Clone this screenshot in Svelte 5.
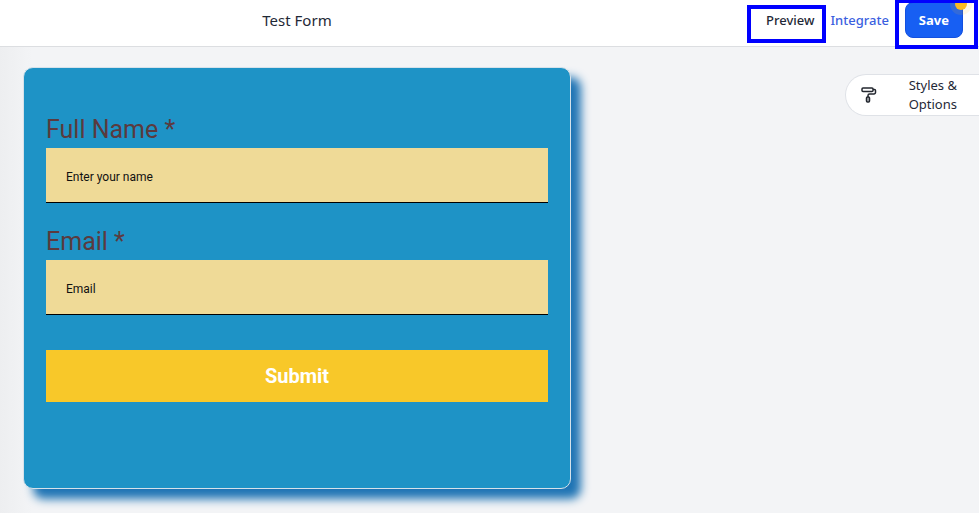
<script lang="ts">
	interface Field {
		id: string;
		label: string;
		type: string;
		placeholder: string;
	}

	const formName = "Test Form";

	const fields: Field[] = [
		{ id: "full-name", label: "Full Name", type: "text", placeholder: "Enter your name" },
		{ id: "email", label: "Email", type: "email", placeholder: "Email" }
	];

	let values = $state<Record<string, string>>({ "full-name": "", email: "" });

	function handleSubmit(event: SubmitEvent) {
		event.preventDefault();
	}
</script>

<div class="builder">
	<header>
		<h1>{formName}</h1>
		<nav>
			<span class="marked preview">
				<a href="#preview">Preview</a>
			</span>
			<a class="integrate" href="#integrate">Integrate</a>
			<span class="marked save">
				<button type="button" class="save-button">Save</button>
				<span class="badge"></span>
			</span>
		</nav>
	</header>

	<main>
		<form onsubmit={handleSubmit}>
			{#each fields as field (field.id)}
				<div class="field">
					<label for={field.id}>{field.label} *</label>
					<input
						id={field.id}
						type={field.type}
						placeholder={field.placeholder}
						bind:value={values[field.id]}
					/>
				</div>
			{/each}
			<button type="submit" class="submit-button">Submit</button>
		</form>

		<button type="button" class="styles-button">
			<svg width="16" height="16" viewBox="0 0 16 16" fill="none" aria-hidden="true">
				<rect x="1" y="1" width="11" height="3.5" rx="1" />
				<path d="M12 2.5H13.5a1 1 0 0 1 1 1v2a1.5 1.5 0 0 1-1.5 1.5H8.5A1.5 1.5 0 0 0 7 8.5v1.5" />
				<rect class="handle" x="5.5" y="10" width="3" height="5" rx="1" />
			</svg>
			<span>Styles &amp;<br />Options</span>
		</button>
	</main>
</div>

<style>
	:global(body) {
		margin: 0;
		background: #f3f4f6;
	}

	.builder {
		min-height: 100vh;
		overflow: hidden;
		background: linear-gradient(to right, #edeef0, #f3f4f6 32px);
		font-family: "Noto Sans", "Open Sans", sans-serif;
		color: #1f2937;
	}

	header {
		display: flex;
		align-items: center;
		justify-content: space-between;
		box-sizing: border-box;
		height: 47px;
		padding: 0 16px 6px 23px;
		background: #fff;
		border-bottom: 1px solid #dcdee1;
	}

	h1 {
		flex: 1;
		max-width: 548px;
		margin: 0;
		font-size: 15px;
		font-weight: 400;
		line-height: 20px;
		text-align: center;
	}

	nav {
		display: flex;
		align-items: center;
		gap: 16px;
		font-size: 13px;
		font-weight: 500;
		line-height: 20px;
	}

	a {
		color: inherit;
		text-decoration: none;
	}

	.integrate {
		color: #3b5fe0;
	}

	/* Blue frames that call out the two actions */
	.marked {
		position: relative;
	}

	.marked::after {
		content: "";
		position: absolute;
		border: 4px solid #00f;
		pointer-events: none;
	}

	.preview::after {
		inset: -5px -12px -13px -19px;
	}

	.save::after {
		inset: -3px -15px -11px -10px;
	}

	.save-button {
		display: block;
		box-sizing: border-box;
		height: 36px;
		padding: 0 13px;
		border: 1px solid #1350e0;
		border-radius: 8px;
		background: #175ff3;
		color: #fff;
		font: inherit;
		font-weight: 700;
		cursor: pointer;
	}

	.badge {
		position: absolute;
		top: -4px;
		right: -4px;
		width: 12px;
		height: 12px;
		border-radius: 50%;
		background: #fdbb22;
		box-shadow: 0 0 0 5px rgba(251, 191, 36, 0.12);
	}

	main {
		display: flex;
		align-items: flex-start;
		justify-content: space-between;
		gap: 24px;
		padding: 20px 0 24px 23px;
	}

	form {
		flex: 1;
		display: flex;
		flex-direction: column;
		gap: 21px;
		box-sizing: border-box;
		max-width: 548px;
		padding: 44px 22px 86px;
		border: 1px solid #d6e2ea;
		border-radius: 10px;
		background: #1e93c6;
		box-shadow: 10px 10px 10px #1f74b4;
		font-family: Roboto, sans-serif;
	}

	.field {
		display: flex;
		flex-direction: column;
	}

	label {
		color: #5b3a3e;
		font-size: 25px;
		line-height: 36px;
	}

	input {
		box-sizing: border-box;
		width: 100%;
		height: 55px;
		padding: 4px 20px 0;
		border: none;
		border-bottom: 1px solid #000;
		border-radius: 0;
		background: #efda97;
		color: #111;
		font-family: inherit;
		font-size: 12px;
	}

	input::placeholder {
		color: #111;
		opacity: 1;
	}

	.submit-button {
		height: 52px;
		margin-top: 14px;
		border: none;
		background: #f8c829;
		color: #fff;
		font-family: inherit;
		font-size: 20px;
		font-weight: 700;
		cursor: pointer;
	}

	.styles-button {
		display: flex;
		align-items: center;
		justify-content: space-between;
		box-sizing: border-box;
		width: 134px;
		height: 42px;
		margin-top: 7px;
		padding: 0 22px 0 15px;
		border: 1px solid #dfe2e7;
		border-right: none;
		border-radius: 21px 0 0 21px;
		background: #fff;
		color: #1f2937;
		font-family: inherit;
		font-size: 13px;
		line-height: 19px;
		text-align: center;
		cursor: pointer;
	}

	svg {
		stroke: #23272f;
		stroke-width: 1.5;
	}

	.handle {
		fill: #b4b7bc;
	}
</style>
